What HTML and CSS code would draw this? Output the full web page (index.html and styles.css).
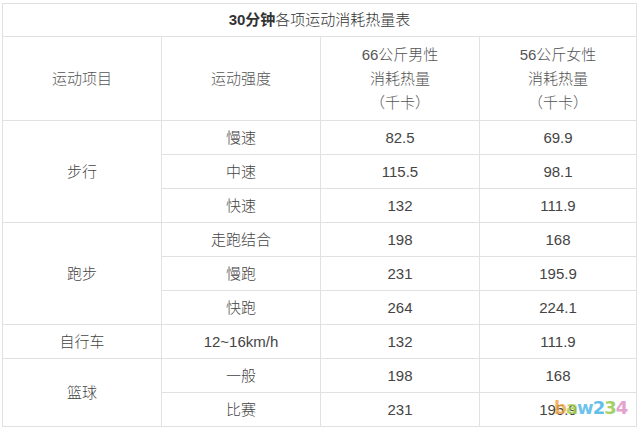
FILE: index.html
```html
<!DOCTYPE html>
<html lang="zh">
<head>
<meta charset="utf-8">
<link rel="stylesheet" href="styles.css">
</head>
<body>
<div class="frame">
<table class="kcal">
  <colgroup>
    <col class="c1"><col class="c2"><col class="c3"><col class="c4">
  </colgroup>
  <tr class="title"><td colspan="4"><b>30分钟</b>各项运动消耗热量表</td></tr>
  <tr class="head">
    <td>运动项目</td>
    <td>运动强度</td>
    <td>66公斤男性<br>消耗热量<br>（千卡）</td>
    <td>56公斤女性<br>消耗热量<br>（千卡）</td>
  </tr>
  <tr><td rowspan="3">步行</td><td>慢速</td><td>82.5</td><td>69.9</td></tr>
  <tr><td>中速</td><td>115.5</td><td>98.1</td></tr>
  <tr><td>快速</td><td>132</td><td>111.9</td></tr>
  <tr><td rowspan="3">跑步</td><td>走跑结合</td><td>198</td><td>168</td></tr>
  <tr><td>慢跑</td><td>231</td><td>195.9</td></tr>
  <tr><td>快跑</td><td>264</td><td>224.1</td></tr>
  <tr><td>自行车</td><td>12~16km/h</td><td>132</td><td>111.9</td></tr>
  <tr><td rowspan="2">篮球</td><td>一般</td><td>198</td><td>168</td></tr>
  <tr><td>比赛</td><td>231</td><td>195.9</td></tr>
</table>
<div class="mark"><span class="m1">b</span><span class="m2">a</span><span class="m3">w</span><span class="m4">2</span><span class="m5">3</span><span class="m6">4</span></div>
</div>
</body>
</html>
```
FILE: styles.css
```css
html, body {
  margin: 0;
  padding: 0;
  background: #fff;
}
.frame {
  position: relative;
  width: 640px;
  height: 430px;
  overflow: hidden;
}
.kcal {
  margin: 3px 0 0 2px;
  width: 634px;
  border-collapse: collapse;
  table-layout: fixed;
  font-family: "Liberation Sans", "Noto Sans CJK SC", sans-serif;
  font-size: 15px;
  font-weight: 300;
  color: #444;
  box-shadow: inset 3px 0 0 -2px #eee;
}
.c1 { width: 159px; }
.c2 { width: 159px; }
.c3 { width: 159px; }
.c4 { width: 157px; }
.kcal td {
  border: 1px solid #e1e1e1;
  text-align: center;
  vertical-align: middle;
  height: 33px;
  padding: 0;
  line-height: 24px;
}
.kcal tr.title td {
  height: 32px;
  color: #333;
}
.kcal tr.title b {
  font-weight: bold;
}
.kcal tr.head td {
  height: 83px;
  color: #555;
}
.mark {
  position: absolute;
  left: 554px;
  top: 397px;
  font-family: "DejaVu Sans", sans-serif;
  font-weight: bold;
  font-size: 18px;
  letter-spacing: -1px;
  opacity: 0.8;
}
.m1 { color: #f2a33a; }
.m2 { color: #a6cf4a; }
.m3 { color: #4ab3ea; }
.m4 { color: #3ab0e6; }
.m5 { color: #8dc63f; }
.m6 { color: #e08bc2; }
```
